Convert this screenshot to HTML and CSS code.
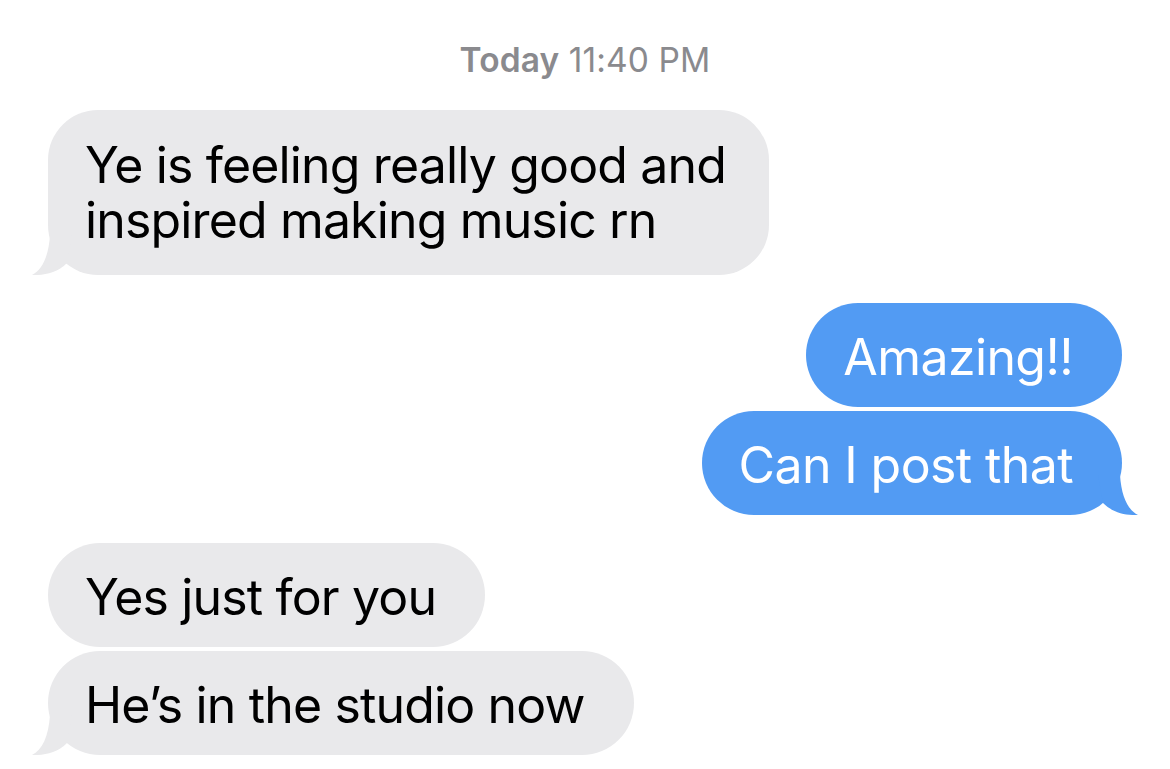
FILE: index.html
```html
<!DOCTYPE html>
<html lang="en">
<head>
<meta charset="utf-8">
<title>Messages</title>
<link rel="stylesheet" href="styles.css">
</head>
<body>
<main class="chat">
  <div class="time"><span class="time-day">Today</span> 11:40 PM</div>

  <div class="group group--them">
    <div class="bubble bubble--them bubble--wide">Ye is feeling really good and inspired making music rn
      <svg class="tail tail--left" viewBox="0 0 40 40" width="40" height="40" aria-hidden="true"><path d="M18 0 C16.5 22 10 35 0 40 C12 40.5 25 38 35 28 L40 0 Z"/></svg>
    </div>
  </div>

  <div class="group group--me">
    <div class="bubble bubble--me">Amazing!!</div>
    <div class="bubble bubble--me">Can I post that
      <svg class="tail tail--right" viewBox="0 0 40 40" width="40" height="40" aria-hidden="true"><path d="M22 0 C23.5 22 30 35 40 40 C28 40.5 15 38 5 28 L0 0 Z"/></svg>
    </div>
  </div>

  <div class="group group--them">
    <div class="bubble bubble--them">Yes just for you</div>
    <div class="bubble bubble--them">He’s in the studio now
      <svg class="tail tail--left" viewBox="0 0 40 40" width="40" height="40" aria-hidden="true"><path d="M18 0 C16.5 22 10 35 0 40 C12 40.5 25 38 35 28 L40 0 Z"/></svg>
    </div>
  </div>
</main>
</body>
</html>
```
FILE: styles.css
```css
html, body {
  margin: 0;
  padding: 0;
  background: #ffffff;
}

body {
  font-family: "Inter", "Roboto", "Liberation Sans", sans-serif;
  -webkit-font-smoothing: antialiased;
}

.chat {
  display: flex;
  flex-direction: column;
  padding: 40px 48px 0;
  gap: 28px;
}

.time {
  text-align: center;
  font-size: 33.5px;
  line-height: 40px;
  color: #8a8a8e;
  letter-spacing: 0.1px;
  margin-bottom: 2px;
}

.time-day {
  font-weight: 600;
}

.group {
  display: flex;
  flex-direction: column;
  gap: 4px;
}

.group--them {
  align-items: flex-start;
}

.group--me {
  align-items: flex-end;
}

.bubble {
  position: relative;
  box-sizing: border-box;
  padding: 27px 49px 22px 37px;
  border-radius: 52px;
  font-size: 50px;
  line-height: 55px;
  letter-spacing: -0.85px;
}

.bubble--wide {
  max-width: 721px;
  padding-top: 28px;
  padding-right: 36px;
  padding-bottom: 27px;
  border-radius: 50px;
}

.bubble--them {
  background: #e9e9eb;
  color: #000000;
}

.bubble--me {
  background: #529bf3;
  color: #ffffff;
  letter-spacing: -0.6px;
}

.tail {
  position: absolute;
  bottom: 0;
  display: block;
}

.tail--left {
  left: -16px;
  fill: #e9e9eb;
}

.tail--right {
  right: -16px;
  fill: #529bf3;
}
```
